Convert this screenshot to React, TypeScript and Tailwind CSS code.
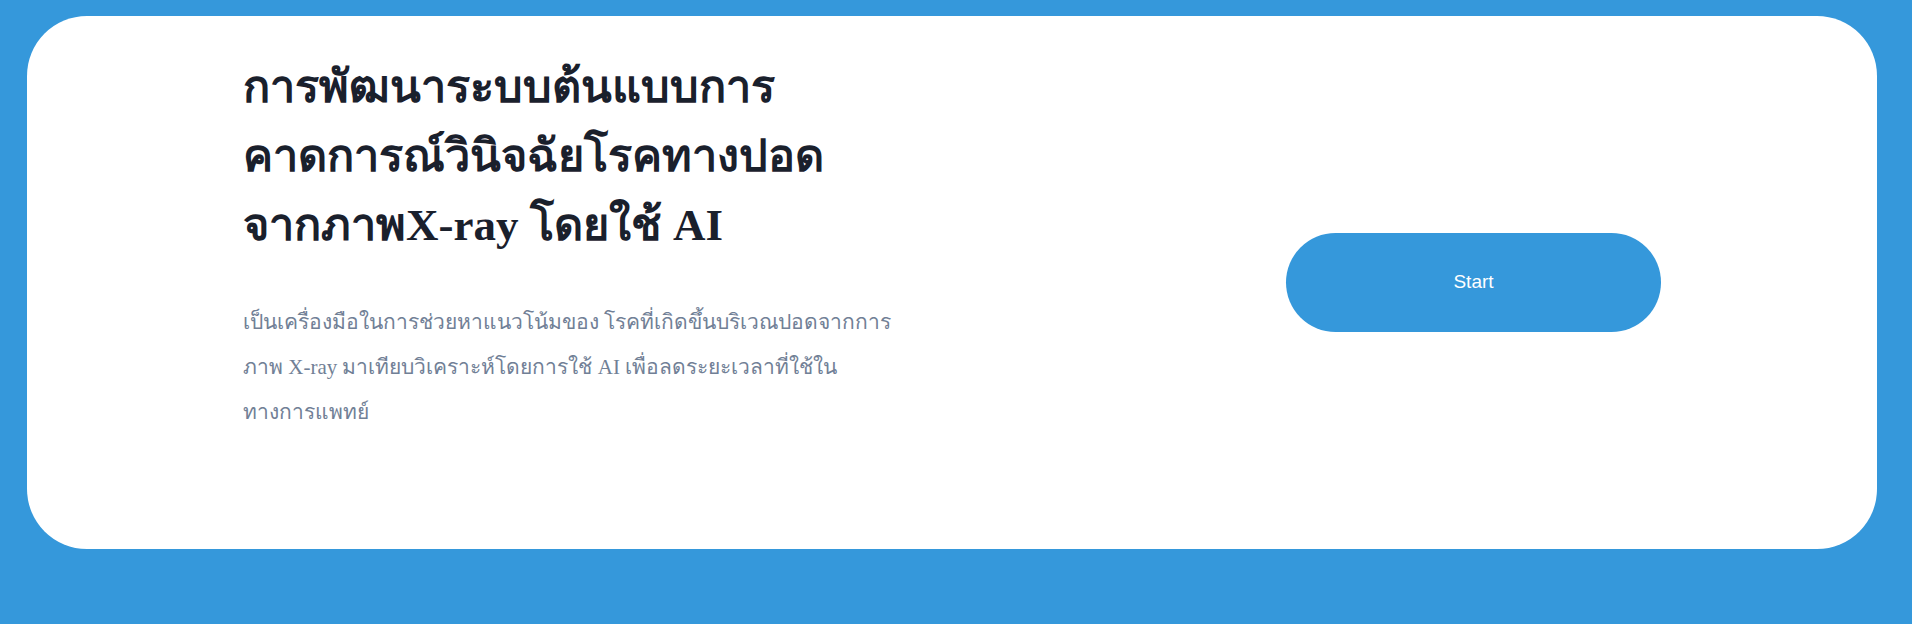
export default function App() {
  return (
    <div className="min-h-screen w-full bg-[#3598db] pt-[16px] pl-[27px]">
      <div className="flex h-[533px] w-[1850px] items-start justify-between rounded-[60px] bg-white px-[216px] pt-[37px] font-['Liberation_Serif',serif]">
        {/* Text */}
        <div className="w-[680px]">
          <h1 className="text-[45px] font-bold leading-[69px] text-[#1a202c]">
            การพัฒนาระบบต้นแบบการ
            <br />
            คาดการณ์วินิจฉัยโรคทางปอด
            <br />
            จากภาพX-ray โดยใช้ AI
          </h1>
          <p className="mt-[40px] text-[21px] leading-[45px] text-[#718096]">
            เป็นเครื่องมือในการช่วยหาแนวโน้มของ โรคที่เกิดขึ้นบริเวณปอดจากการ
            <br />
            ภาพ X-ray มาเทียบวิเคราะห์โดยการใช้ AI เพื่อลดระยะเวลาที่ใช้ใน
            <br />
            ทางการแพทย์
          </p>
        </div>

        {/* Start button */}
        <div className="flex h-full items-center pb-[37px]">
          <button className="h-[99px] w-[375px] rounded-full bg-[#3598db] font-['Liberation_Sans',Arial,sans-serif] text-[19px] text-white">
            Start
          </button>
        </div>
      </div>
    </div>
  );
}
